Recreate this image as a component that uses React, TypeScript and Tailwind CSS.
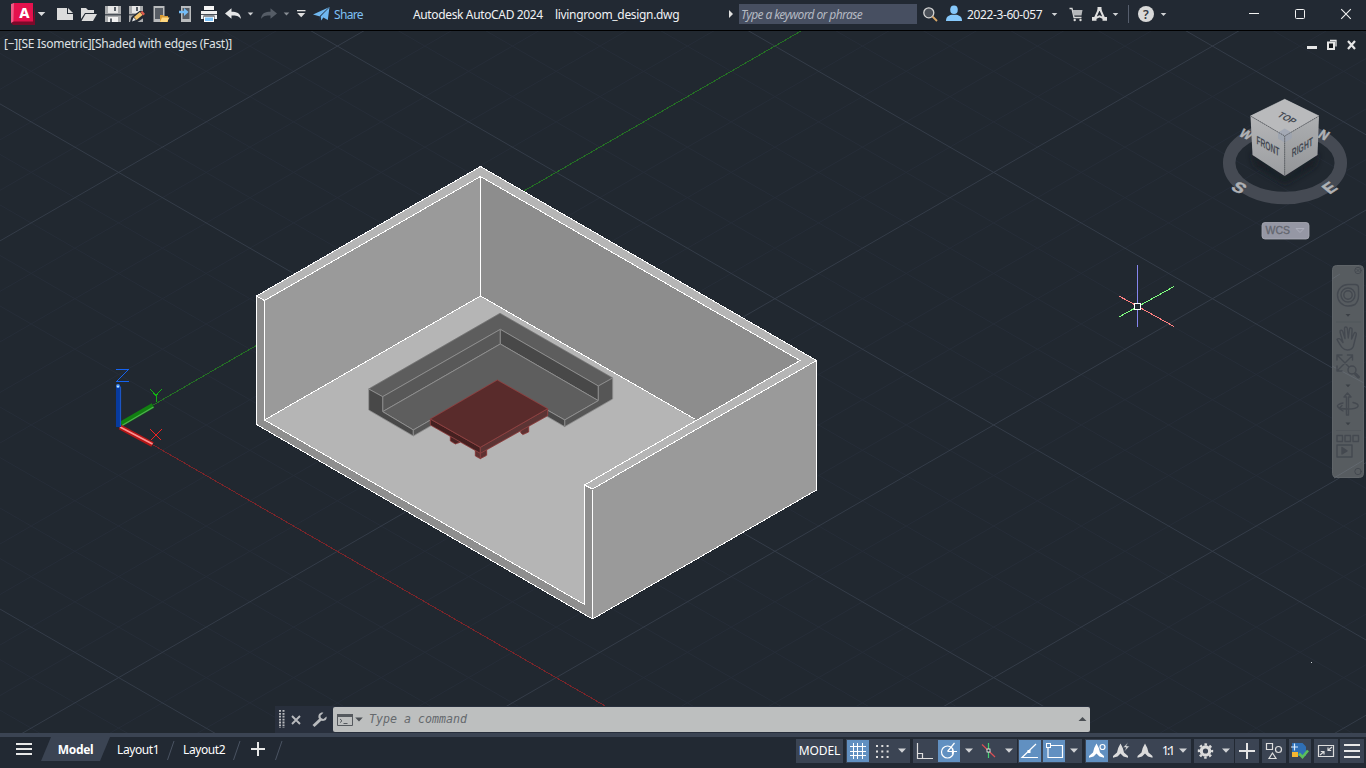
import React from "react";

type GlyphProps = { x: number; w: number; y?: number; h?: number; className?: string; children?: React.ReactNode };

/* A slice of a toolbar, drawn in window coordinates. */
function Glyph({ x, w, y = 0, h = 30, className = "", children }: GlyphProps) {
  return (
    <svg width={w} height={h} viewBox={`${x} ${y} ${w} ${h}`} className={`block shrink-0 ${className}`} aria-hidden="true">
      {children}
    </svg>
  );
}

function Caret({ x, y, s = 3, fill = "#d0d2d5" }: { x: number; y: number; s?: number; fill?: string }) {
  return <path d={`M${x - s} ${y}h${2 * s}l${-s} ${s + 0.3}z`} fill={fill} />;
}

function TitleBar() {
  return (
    <header className="flex h-[31px] shrink-0 items-start border-b border-black bg-[#222933] text-[12px] text-[#f0f1f3]">
      <Glyph x={0} w={52}>
        <path d="M11 23l3-3h19l2-14v19H13z" fill="#7b0a2b" />
        <path d="M13.500 3H33v18.500H11.500z" fill="#e5114d" />
        <path d="M11 4l3-1-.6 18.500L11 23z" fill="#ef5c86" />
        <text x="24.300" y="17.500" textAnchor="middle" fontFamily="Noto Sans, sans-serif" fontWeight="800" fontSize="14.500" fill="#fff">A</text>
        <Caret x={41.5} y={12} s={3.8} fill="#d9dadc" />
      </Glyph>
      <Glyph x={52} w={24}>
        <path d="M57 8h10v6h6v6H57z" fill="#dcdcdc" />
        <path d="M68 8l5 5h-5z" fill="#dcdcdc" />
      </Glyph>
      <Glyph x={76} w={26}>
        <path d="M81 19V8h5l2 2h6v3h-9z" fill="#dcdcdc" />
        <path d="M85.500 14H97l-4 7H81.500z" fill="#dcdcdc" />
      </Glyph>
      <Glyph x={102} w={24}>
        <path d="M105 6h16v16h-16z" fill="#a9abad" />
        <path d="M108 6h10v7h-10z" fill="#e6e6e6" />
        <path d="M114 7h2v4h-2z" fill="#555b63" />
        <path d="M105 14h16v1.500h-16z" fill="#4a5058" />
        <path d="M108 17h10v5h-10z" fill="#f1f1f1" />
        <path d="M110 18.500h2V22h-2z" fill="#555b63" />
      </Glyph>
      <Glyph x={126} w={24}>
        <path d="M129 6h14v16h-14z" fill="#a9abad" />
        <path d="M132 6h8v7h-8z" fill="#e6e6e6" />
        <path d="M136 7h2v4h-2z" fill="#555b63" />
        <path d="M129 14h14v1.500h-14z" fill="#4a5058" />
        <path d="M130 22l1.500-5 8-6h7v5l-9 6z" fill="#222933" />
        <path d="M132 21.500l1.500-4 2.500 2.500z" fill="#e9e9e9" />
        <path d="M134 17l6-5 2.500 3-6 5z" fill="#f2c46d" />
        <path d="M140.500 12l2-1 2.500 3-2 1.500z" fill="#e05b4d" />
      </Glyph>
      <Glyph x={150} w={24}>
        <path d="M153.500 6h11v16h-11z" fill="#b9bbbd" />
        <path d="M155 8h8v11h-8z" fill="#565c64" />
        <path d="M160 22v-7h3l1 1h4v6z" fill="#d99b33" />
        <path d="M162 17.500h7.500L167 22h-7z" fill="#ffd982" />
      </Glyph>
      <Glyph x={174} w={24}>
        <path d="M181 6h10v16h-10z" fill="#b9bbbd" />
        <path d="M182.500 8h7v11h-7z" fill="#565c64" />
        <path d="M179 10.700h5V8l4.500 4-4.500 4v-2.700h-5z" fill="#74bdf7" />
      </Glyph>
      <Glyph x={198} w={24}>
        <path d="M204 6h10v4h-10z" fill="#f5f5f5" />
        <path d="M201 11h16v8h-2.500v-3.500h-11V19H201z" fill="#f0f0f0" />
        <path d="M201 14h16v1h-16z" fill="#4a5058" />
        <path d="M204 16.500h10V22h-10z" fill="#fff" />
        <path d="M205 17.500h8v3.500h-8z" fill="#7cc3fa" />
      </Glyph>
      <Glyph x={222} w={34}>
        <path d="M225 13.500l6.500-5.300v3.600c5 0 9 1.200 9.500 7.200-2-3.200-5-3.600-9.500-3.600v3.400z" fill="#e4e5e6" />
        <Caret x={250.500} y={12.500} s={2.800} />
      </Glyph>
      <Glyph x={256} w={36}>
        <path d="M277 13.500l-6.500-5.300v3.600c-5 0-9 1.200-9.500 7.200 2-3.200 5-3.600 9.500-3.600v3.400z" fill="#555c66" />
        <Caret x={286.500} y={12.500} s={2.800} fill="#8a8f96" />
      </Glyph>
      <Glyph x={292} w={18}>
        <path d="M297 10h8.500v1.300H297z" fill="#e0e0e0" />
        <Caret x={301.200} y={13} s={4} fill="#e0e0e0" />
      </Glyph>
      <Glyph x={310} w={24}>
        <path d="M313 14.500L329.500 7l-9.500 9.500z" fill="#6fb7f0" />
        <path d="M329.500 7l-1.700 13-4.500-2.500-2 3-.7-4z" fill="#6fb7f0" />
        <path d="M329 7.500l-9 8.500v4.500" stroke="#2a3b50" strokeWidth=".7" fill="none" />
      </Glyph>
      <span className="w-[79px] whitespace-nowrap leading-[29px] tracking-[-0.65px] text-[#7fc0f5]">Share</span>
      <span className="w-[142px] whitespace-nowrap leading-[29px] tracking-[-0.36px]">Autodesk AutoCAD 2024</span>
      <span className="w-[170px] whitespace-nowrap leading-[29px] tracking-[-0.33px]">livingroom_design.dwg</span>
      <Glyph x={725} w={14}>
        <path d="M729 10l4 4-4 4z" fill="#e0e0e0" />
      </Glyph>
      <div className="mt-1 h-5 w-[178px] whitespace-nowrap bg-[#474f61] pl-[2px] text-[12px] italic leading-[21px] tracking-[-0.6px] text-[#b4b9c1]">
        Type a keyword or phrase
      </div>
      <Glyph x={917} w={26}>
        <circle cx="928.800" cy="12.800" r="5" fill="#4a4f57" stroke="#d5d5d5" strokeWidth="1.300" />
        <path d="M932.500 16.500l4.500 4.500" stroke="#d9a869" strokeWidth="1.800" />
      </Glyph>
      <Glyph x={943} w={24}>
        <ellipse cx="954" cy="9.800" rx="3.800" ry="4.300" fill="#86c8fb" />
        <path d="M946 21c0-4.500 2.500-5.500 5.500-6.300h5c3 .8 5.500 1.800 5.500 6.300z" fill="#86c8fb" />
      </Glyph>
      <span className="w-[81px] whitespace-nowrap leading-[29px] tracking-[-0.38px]">2022-3-60-057</span>
      <Glyph x={1048} w={18}>
        <Caret x={1054.500} y={13} s={2.800} />
      </Glyph>
      <Glyph x={1066} w={22}>
        <path d="M1069.500 8.500h2.500l2 9h7.500" stroke="#d8d8d8" strokeWidth="1.300" fill="none" />
        <path d="M1072.500 10h10l-1 5.500h-8z" fill="#b5b7ba" />
        <circle cx="1074.700" cy="20" r="1.200" fill="#d8d8d8" />
        <circle cx="1080.500" cy="20" r="1.200" fill="#d8d8d8" />
      </Glyph>
      <Glyph x={1088} w={32}>
        <path d="M1099.500 8l-5 11M1099.500 8l5 11M1095 18.300l4.500-2 4.500 2" stroke="#dedede" strokeWidth="2" fill="none" />
        <path d="M1097.500 7h4v4h-4zM1092 17h4.500v3.800h-4.500zM1102.500 17h4.500v3.800h-4.500z" fill="#dedede" />
        <Caret x={1115.500} y={13} s={2.800} />
      </Glyph>
      <Glyph x={1120} w={14}>
        <path d="M1128.500 5v18" stroke="#565e6d" />
      </Glyph>
      <Glyph x={1134} w={36}>
        <circle cx="1146" cy="14" r="8" fill="#d9d9d9" />
        <text x="1146" y="18.500" textAnchor="middle" fontFamily="Noto Sans, sans-serif" fontWeight="600" fontSize="12.500" fill="#31373f">?</text>
        <Caret x={1163.500} y={13} s={2.800} />
      </Glyph>
      <div className="flex flex-1 justify-end">
        <Glyph x={1231} w={46}>
          <path d="M1249 13.500h10" stroke="#f2f2f2" />
        </Glyph>
        <Glyph x={1277} w={46}>
          <rect x="1295.500" y="9.500" width="9" height="9" rx="1" fill="none" stroke="#f2f2f2" />
        </Glyph>
        <Glyph x={1323} w={43}>
          <path d="M1341.200 9.200l9.600 9.600M1350.800 9.200l-9.600 9.600" stroke="#f2f2f2" strokeWidth="1.100" />
        </Glyph>
      </div>
    </header>
  );
}

const SLOPE = 0.57735;
const MINOR = 252.6 / 5;

function GridLines() {
  const lines: React.ReactNode[] = [];
  for (const major of [false, true]) {
    for (let i = -30; i <= 30; i++) {
      if ((i % 5 === 0) !== major || i === 0) continue;
      const stroke = major ? "#343c48" : "#262d38";
      const c = 493.5 + i * MINOR;
      const d = 356.5 + i * MINOR;
      lines.push(<path key={`r${i}`} d={`M0 ${c}L1366 ${c - 1366 * SLOPE}`} stroke={stroke} />);
      lines.push(<path key={`f${i}`} d={`M0 ${d}L1366 ${d + 1366 * SLOPE}`} stroke={stroke} />);
    }
  }
  return <g fill="none">{lines}</g>;
}

function Room() {
  return (
    <g shapeRendering="crispEdges" stroke="#fff" strokeWidth="1" strokeLinejoin="round">
      <g stroke="none">
        <path d="M257 296L480.500 166.500 816.500 360.500V490L592.500 619 257 424.500z" fill="#b5b5b5" />
        <path d="M265 301L480.500 176.500V296L265 420z" fill="#9a9a9a" />
        <path d="M480.500 176.500L801 360.500 696 420.500 480.500 296z" fill="#8d8d8d" />
        <path d="M257 296l8 5v119l320 184.500V485l8 4.500V619L257 424.500z" fill="#8e8e8e" />
        <path d="M592.500 489.500l224-129V490l-224 129z" fill="#9a9a9a" />
      </g>
      <g fill="none">
        <path d="M256.500 296L480.500 166.500 816.500 360.500V490L592.500 619 256.500 424.500z" />
        <path d="M256.500 296l8 4.500L480.500 176.500 800 360.500 584.500 485l8 4L816.500 360.500" />
        <path d="M264.500 300.500V420L584.500 604.500v-119M592.500 489.500V619M480.500 176.500V296M264.500 420L480.500 296 695.500 419.500" />
      </g>
    </g>
  );
}

function Furniture() {
  return (
    <g transform="translate(350 300) scale(.33333)" shapeRendering="crispEdges" strokeWidth="3" strokeLinejoin="round">
      <g stroke="#8e8e8e">
        <path d="M450 40L788 234 745 258 451 88 98 290 56 267z" fill="#5d5d5d" stroke="#767676" />
        <path d="M98 290L451 88V132L98 335z" fill="#585858" />
        <path d="M451 88L745 258V302L451 132z" fill="#484848" />
        <path d="M98 335L451 132 745 302 644 360 560 312 280 338 190 390z" fill="#5e5e5e" />
        <path d="M56 267L98 290V335L190 390V408L56 330z" fill="#484848" />
        <path d="M190 390L290 332V350L190 408z" fill="#555" />
        <path d="M745 258L788 234V297L644 380V360L745 302z" fill="#565656" />
        <path d="M644 360L560 312V331L644 380z" fill="#484848" />
      </g>
      <g stroke="#8b4040">
        <path d="M301 405L318 412 330 420V427L316 432 301 423z" fill="#4a2424" />
        <path d="M536 378V396L518 404 512 398V388z" fill="#5e3232" />
        <path d="M376 448L391 457 410 446V466L391 476 376 468z" fill="#5e3232" />
        <path d="M391 457V476" fill="none" />
        <path d="M241 357L391 442V460L241 375z" fill="#452020" />
        <path d="M391 442L593 326V347L391 460z" fill="#5c3434" />
        <path d="M442 240L593 326 391 442 241 357z" fill="#592b2b" />
      </g>
    </g>
  );
}

function UcsIcon() {
  return (
    <g fill="none">
      <path d="M121 424L153 405.500" stroke="#118011" strokeWidth="5" />
      <path d="M122 425.500L153.500 407" stroke="#4fae4f" strokeWidth="1.300" />
      <path d="M120 427L152.500 444.500" stroke="#b51515" strokeWidth="5" />
      <path d="M120 427L152.500 444" stroke="#ff8f8f" strokeWidth="1.800" />
      <path d="M118.500 386v41" stroke="#073a9e" strokeWidth="5" />
      <path d="M120.500 387v39" stroke="#1c55c4" strokeWidth="1.200" />
      <circle cx="118" cy="386" r="2" fill="#3b86f5" />
      <circle cx="118" cy="386.500" r=".9" fill="#dff" />
      <g shapeRendering="crispEdges">
        <path d="M116 369.500h12.500L116.500 381.500H129" stroke="#1563f0" />
        <path d="M150.500 389.500l5.500 6 5.500-6M156.500 395.500v6" stroke="#12b012" />
        <path d="M150.500 429.500l11 11M161.500 429.500l-11 11" stroke="#ee2222" />
      </g>
    </g>
  );
}

function ViewCube() {
  return (
    <g fontFamily="Liberation Sans, Arial, sans-serif" fontWeight="700">
      <defs>
        <linearGradient id="faceL" x1="0" y1="0" x2="0" y2="1"><stop offset="0" stopColor="#b4b5b7" /><stop offset="1" stopColor="#9c9ea1" /></linearGradient>
        <linearGradient id="faceR" x1="0" y1="0" x2="0" y2="1"><stop offset="0" stopColor="#adafb1" /><stop offset="1" stopColor="#939598" /></linearGradient>
        <filter id="soft" x="-50%" y="-50%" width="200%" height="200%"><feGaussianBlur stdDeviation="3" /></filter>
      </defs>
      <ellipse cx="1285" cy="163" rx="55.800" ry="35" fill="none" stroke="#454a53" strokeWidth="12.500" />
      <path d="M1251 152l34 26 34-26-4 14-30 18-30-18z" fill="#171c22" opacity=".8" filter="url(#soft)" />
      <g fill="#b0b2b5" stroke="#b0b2b5" strokeWidth=".5" fontSize="18">
        <text transform="matrix(.8 .35 -.6 .72 1238 135.500)" fontSize="14">W</text>
        <text transform="matrix(.8 .35 -.6 .8 1317 137)" fontSize="14">N</text>
        <text transform="matrix(.88 .45 -.62 .66 1230 189)">S</text>
        <text transform="matrix(.76 -.5 .72 .6 1329.500 194.500)">E</text>
      </g>
      <path d="M1250.500 116L1284.700 136V176L1252.500 155z" fill="url(#faceL)" />
      <path d="M1319 116L1284.700 136V176L1317.500 155z" fill="url(#faceR)" />
      <path d="M1284.700 99.300L1319 116 1284.700 136 1250.500 116z" fill="#b9babc" />
      <path d="M1278 132.500l6.700-4 7 4v6l-7 4-6.700-4z" fill="#9aa2b2" opacity=".7" />
      <path d="M1250.500 116L1284.700 136V176M1319 116L1284.700 136" stroke="#5a5d62" strokeWidth=".9" strokeDasharray="1.500 .7" fill="none" />
      <path d="M1250.500 116L1284.700 99.300 1319 116" stroke="#d0d1d3" strokeWidth=".6" fill="none" />
      <g fill="#454a53" fontSize="12">
        <text transform="matrix(.68 .36 -.66 .56 1276.500 116)" fontSize="11.500">TOP</text>
        <text transform="matrix(.56 .31 0 1 1256.500 143.800)" textLength="41">FRONT</text>
        <text transform="matrix(.56 -.33 0 1 1291.700 157.500)" textLength="38">RIGHT</text>
      </g>
      <rect x="1262" y="222.500" width="47" height="16.500" rx="3" fill="#9597a4" stroke="#a9abb5" strokeWidth=".8" />
      <text x="1265.500" y="234" fontSize="10.500" fontWeight="400" fill="#63666f" stroke="#63666f" strokeWidth=".3">WCS</text>
      <path d="M1296 228.500h8l-4 4z" fill="none" stroke="#acaebb" />
    </g>
  );
}

function NavigationBar() {
  return (
    <g>
      <rect x="1332.500" y="265.500" width="31" height="212" rx="4" fill="#575c60" stroke="#5f6468" />
      <path d="M1332 366L1364 383M1334 478L1364 460M1332 279L1340 274" stroke="#62686f" fill="none" />
      <g stroke="#444950" strokeWidth="1.400" fill="none" strokeLinejoin="round" strokeLinecap="round">
        <circle cx="1358" cy="270.500" r="3.200" strokeWidth="1" />
        <path d="M1356.800 269.300l2.400 2.400M1359.200 269.300l-2.400 2.400" strokeWidth=".9" />
        <path d="M1348 284.500h7q3.500 0 3.500 3.500v8q0 5-3.500 8.500-3 1.500-7 1.500c-6 0-10.500-5-10.500-11s5-10.500 10.500-10.500z" />
        <circle cx="1348" cy="295" r="7" />
        <circle cx="1348" cy="295" r="4.200" />
        <path d="M1337 339.500c1-1.500 3-1 4 .5l2 2.500-3-10.500c-.3-2 2-2.500 2.700-.7l2.300 7.200-.5-10c0-2 2.500-2 2.800 0l1 9.500 1.200-9c.3-1.800 2.700-1.500 2.600.5l-.5 9.500 2.400-5.500c.8-1.700 2.800-1 2.300 1l-3 12c-1 2.500-3 3.500-6 3.500-5 0-7-5-10.300-10.500z" />
        <path d="M1338 356l14 14M1352 356l-14 14M1337 360v-5h5M1347.500 355h5v5M1337 366v5h5" />
        <circle cx="1352" cy="370" r="4" fill="#575c60" />
        <path d="M1355.500 374l3 3" strokeWidth="3" />
        <path d="M1346.500 415v-18h-2.500l3.500-4 3.500 4h-2.500v18z" />
        <path d="M1343 403c-9 2-7 6 5 6s13-5 5-6.500M1343 411l-4-2.500 3-3" />
        <path d="M1337 435.500h5.500v6h-5.500zM1345 435.500h5.500v6h-5.500zM1353 435.500h5.500v6h-5.500zM1337 445h15v12h-15z" />
        <path d="M1342 447.500v6.500l5-3.200z" fill="#444950" />
        <circle cx="1358" cy="471.500" r="3.200" strokeWidth="1" />
      </g>
      <path d="M1336 322h25M1336 430.500h25" stroke="#51565b" />
      <Caret x={1348} y={314} s={2.500} fill="#3b4046" />
      <Caret x={1348} y={384.500} s={2.500} fill="#3b4046" />
      <Caret x={1348} y={422.500} s={2.500} fill="#3b4046" />
    </g>
  );
}

function Crosshair() {
  return (
    <g shapeRendering="crispEdges" fill="none">
      <path d="M1137.500 265v62" stroke="#8585ee" />
      <path d="M1119 296L1174 326.500" stroke="#ff8080" />
      <path d="M1119 317L1174 286.500" stroke="#80ff80" />
      <rect x="1134.500" y="303.500" width="6" height="6" fill="#222931" stroke="#fff" />
    </g>
  );
}

function CommandLine() {
  return (
    <div className="absolute left-[275px] top-[675px] flex h-[27px] w-[815px] bg-[#282f3c]">
      <Glyph x={275} y={706} w={58} h={27}>
        <path d="M280 710v18M283.500 710v18" stroke="#b8babd" strokeWidth="2" strokeDasharray="1.800 1.100" />
        <path d="M292 716l8 8M300 716l-8 8" stroke="#b8babd" strokeWidth="1.900" />
        <path d="M313.500 726l8-7.500" stroke="#b8babd" strokeWidth="3" />
        <path d="M326.500 716.500l-3 2.500-2.500-.8-.6-2.500 3-3c-3.500-.6-5.500 2-4.900 5.300l3 2.800c3.500.7 5.800-1.300 5-4.300z" fill="#b8babd" />
      </Glyph>
      <div className="my-px flex flex-1 rounded-[2px] bg-[#bdbfbf]">
        <Glyph x={333} y={707} w={36} h={25}>
          <path d="M337.500 714.500h15v11h-15z" fill="none" stroke="#55595e" />
          <path d="M337 714h16v3h-16z" fill="#55595e" />
          <path d="M340 719l2 1.800-2 1.800M343.500 723.500h4" fill="none" stroke="#55595e" />
          <Caret x={359} y={717.500} s={3.800} fill="#4b4f54" />
        </Glyph>
        <span className="flex-1 whitespace-nowrap font-['DejaVu_Sans_Mono',monospace] text-[11.63px] italic leading-[24px] text-[#65696d]">Type a command</span>
        <Glyph x={1074} y={707} w={16} h={25}>
          <path d="M1078.500 721l4-4 4 4z" fill="#4b4f54" />
        </Glyph>
      </div>
    </div>
  );
}

function Viewport() {
  return (
    <main className="relative h-[702px] shrink-0 overflow-hidden bg-[#212830]">
      <svg width="1366" height="702" viewBox="0 31 1366 702" className="block">
        <GridLines />
        <g shapeRendering="crispEdges">
          <path d="M118.600 425L801 31" stroke="#247024" />
          <path d="M118.600 425L652 733" stroke="#7b2429" />
        </g>
        <Room />
        <Furniture />
        <UcsIcon />
        <ViewCube />
        <NavigationBar />
        <Crosshair />
        <rect x="1311" y="662" width="1" height="1" fill="#d0d4d8" />
      </svg>
      <div className="absolute left-1 top-[5px] whitespace-nowrap text-[12px] leading-4 tracking-[-0.29px] text-[#dfe1e4]">[−][SE Isometric][Shaded with edges (Fast)]</div>
      <div className="absolute right-0 top-0">
        <Glyph x={1302} y={31} w={64} h={30}>
          <path d="M1307 46h10v3h-10z" fill="#e6e6e6" />
          <path d="M1330 40.500h6v6" fill="none" stroke="#e6e6e6" strokeWidth="1.300" />
          <path d="M1328 42.500h6v6.500h-6z" fill="#111519" stroke="#e6e6e6" strokeWidth="2" />
          <path d="M1348 41l7 8M1355 41l-7 8" stroke="#e6e6e6" strokeWidth="2.200" />
        </Glyph>
      </div>
      <CommandLine />
    </main>
  );
}

/* Annotation figure: narrow head with two spread legs. */
const FIGURE = "l2.300 4.500 1.200 4.500 4 3.500v1.800l-4.500-1.300-3-3-3 3-4.500 1.300v-1.800l4-3.500 1.200-4.500z";

function StatusBar() {
  const g = { y: 739, h: 24 };
  return (
    <footer className="flex h-[35px] shrink-0 border-t-4 border-[#3b4453] bg-[#222933] text-[12px] text-white">
      <nav className="flex h-6 w-[796px] leading-[26px]">
        <Glyph x={0} w={41} y={737} h={24}>
          <path d="M16 744h16M16 749h16M16 754h16" stroke="#e8e8e8" strokeWidth="2" />
        </Glyph>
        <div className="h-6 w-[69px] bg-[#3b4453] text-center font-bold tracking-[-0.35px] [clip-path:polygon(10px_0,100%_0,59px_100%,0_100%)]">Model</div>
        <span className="w-[53px] pl-[7px] tracking-[-0.4px]">Layout1</span>
        <Glyph x={163} w={20} y={737} h={24}><path d="M167.500 760l6.500-19" stroke="#4a5362" /></Glyph>
        <span className="w-[46px] tracking-[-0.4px]">Layout2</span>
        <Glyph x={229} w={60} y={737} h={24}>
          <path d="M233.500 760l6.500-19M275.500 760l6.500-19" stroke="#4a5362" />
          <path d="M251 749h14M258 742v14" stroke="#e8e8e8" strokeWidth="2" />
        </Glyph>
      </nav>
      <div className="mt-[2px] flex h-6">
        <div className="w-[47px] bg-[#3b4453] text-center leading-[24px] tracking-[-0.1px]">MODEL</div>
        <Glyph x={846} w={64} {...g} className="ml-[3px] bg-[#3b4453]">
          <path d="M847 740h22v22h-22z" fill="#6190c1" />
          <path d="M850 746.500h16M850 751.500h16M850 755.500h16M853.500 743v16M857.500 743v16M862.500 743v16" stroke="#fff" />
          <path d="M876 746h13M876 751.500h13M876 757h13" stroke="#ddd" strokeWidth="2" strokeDasharray="2 3.300" />
          <Caret x={902} y={748.500} s={4} />
        </Glyph>
        <Glyph x={913} w={104} {...g} className="ml-[3px] bg-[#3b4453]">
          <path d="M917.500 743v15.500H933M917.500 753.500h5v5" fill="none" stroke="#ddd" strokeWidth="1.200" />
          <path d="M938 740h22v22h-22z" fill="#6190c1" />
          <circle cx="947.500" cy="752" r="6" fill="none" stroke="#fff" strokeWidth="1.200" />
          <path d="M947.500 751.500h9.500M947.500 751.500l7-8.500M952.500 748v6.500" fill="none" stroke="#fff" strokeWidth="1.200" />
          <Caret x={969} y={748.500} s={4} />
          <path d="M982 744.500l13 12.500" stroke="#dc4f55" strokeWidth="1.200" />
          <path d="M988.500 743v15" stroke="#44cf72" strokeWidth="1.200" />
          <rect x="987" y="749" width="3" height="3" fill="#222933" stroke="#fff" strokeWidth=".8" />
          <Caret x={1009} y={748.500} s={4} />
        </Glyph>
        <Glyph x={1018} w={64} {...g} className="ml-px bg-[#3b4453]">
          <path d="M1019 740h22v22h-22zM1043 740h22v22h-22z" fill="#6190c1" />
          <path d="M1036 744l-14 13.500h16" fill="none" stroke="#fff" strokeWidth="1.200" />
          <rect x="1027.500" y="750" width="3" height="3" fill="#fff" />
          <path d="M1051 745.500h11.500v12H1048V748" fill="none" stroke="#fff" strokeWidth="1.200" />
          <rect x="1046.500" y="743.500" width="4" height="4" fill="#6190c1" stroke="#fff" />
          <Caret x={1074} y={748.500} s={4} />
        </Glyph>
        <Glyph x={1085} w={106} {...g} className="ml-[3px] bg-[#3b4453]">
          <path d="M1086 740h22v22h-22z" fill="#6190c1" />
          <path d={`M1096.500 743.500${FIGURE}`} fill="#fff" />
          <circle cx="1102.500" cy="747" r="2.500" fill="#6190c1" stroke="#fff" strokeWidth="1.200" />
          <path d={`M1120.500 743.500${FIGURE}`} fill="#dcdcdc" />
          <path d="M1128 742.500l-5 5h3l-1.500 4 5-5.500h-3z" fill="#dcdcdc" stroke="#3b4453" strokeWidth=".5" />
          <path d={`M1145 743.500${FIGURE}`} fill="#dcdcdc" />
          <text x="1162" y="755" fontFamily="Noto Sans, sans-serif" fontSize="12" textLength="13" fill="#fff">1:1</text>
          <Caret x={1183} y={748.500} s={4} />
        </Glyph>
        <Glyph x={1194} w={40} {...g} className="ml-[3px] bg-[#3b4453]">
          <circle cx="1205.500" cy="751" r="4.200" fill="none" stroke="#dcdcdc" strokeWidth="3.200" />
          <circle cx="1205.500" cy="751" r="6.600" fill="none" stroke="#dcdcdc" strokeWidth="2.200" strokeDasharray="2.600 2.584" strokeDashoffset="1.300" />
          <Caret x={1226} y={748.500} s={4} />
        </Glyph>
        <Glyph x={1235} w={24} {...g} className="ml-px bg-[#3b4453]">
          <path d="M1239 751h16M1247 743v16" stroke="#e4e4e4" strokeWidth="2" />
        </Glyph>
        <Glyph x={1262} w={24} {...g} className="ml-[3px] bg-[#3b4453]">
          <path d="M1266.500 743.500h6v6h-6zM1272.500 753l3.500 5.500h-7z" fill="none" stroke="#ddd" strokeWidth="1.200" />
          <circle cx="1278.500" cy="749.500" r="3" fill="none" stroke="#ddd" strokeWidth="1.200" />
        </Glyph>
        <Glyph x={1289} w={22} {...g} className="ml-[3px] bg-[#3b4453]">
          <path d="M1292 743h10.500l3.500 3.500V756h-14z" fill="#2f6fb5" />
          <path d="M1291 747h7M1294.500 743.500v7" stroke="#d7ebff" strokeWidth="1.200" />
          <path d="M1292 752h6v5h-6z" fill="#f5b531" />
          <path d="M1299 753.500l3.500 3.500 5.500-6.500" fill="none" stroke="#5bbf5b" strokeWidth="2.600" />
        </Glyph>
        <Glyph x={1314} w={24} {...g} className="ml-[3px] bg-[#3b4453]">
          <path d="M1318.500 745.500h15v11h-15z" fill="none" stroke="#ddd" strokeWidth="1.200" />
          <path d="M1332 747l-3.500 3M1328 747.500v3h3.200M1320 755l3.500-3M1324 754.500v-3h-3.200" fill="none" stroke="#ddd" strokeWidth="1.200" />
        </Glyph>
        <Glyph x={1340} w={24} {...g} className="ml-[2px] bg-[#3b4453]">
          <path d="M1344 745h16M1344 751h16M1344 757h16" stroke="#e8e8e8" strokeWidth="2" />
        </Glyph>
      </div>
    </footer>
  );
}

export default function App() {
  return (
    <div className="flex h-[768px] w-[1366px] flex-col overflow-hidden bg-[#222933] font-['Noto_Sans','Liberation_Sans',sans-serif]">
      <TitleBar />
      <Viewport />
      <StatusBar />
    </div>
  );
}
